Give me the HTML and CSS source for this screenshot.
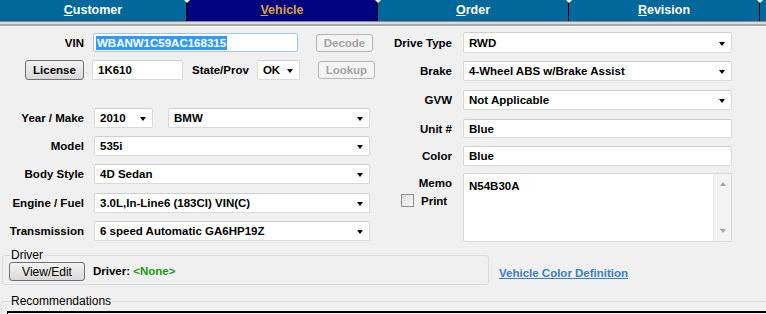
FILE: index.html
```html
<!DOCTYPE html>
<html lang="en">
<head>
    <meta charset="UTF-8">
    <title>Vehicle</title>
    <link rel="stylesheet" href="styles.css">
</head>
<body>
    <div class="tabs">
        <div class="tab"><u>C</u>ustomer</div>
        <div class="tab active"><u>V</u>ehicle</div>
        <div class="tab"><u>O</u>rder</div>
        <div class="tab"><u>R</u>evision</div>
        <div class="tab rest"></div>
    </div>
    <div class="rule"></div>

    <div class="main">
        <!-- левая колонка -->
        <div class="left">
            <div class="row r-vin">
                <div class="label">VIN</div>
                <div class="input vin w-vin"><span class="sel">WBANW1C59AC168315</span></div>
                <div class="btn disabled">Decode</div>
            </div>
            <div class="row r-lic">
                <div class="label"><div class="btn lic">License</div></div>
                <div class="input w-lic">1K610</div>
                <div class="label2">State/Prov</div>
                <div class="select w-state">OK</div>
                <div class="btn disabled">Lookup</div>
            </div>
            <div class="row r-year">
                <div class="label">Year / Make</div>
                <div class="select w-year">2010</div>
                <div class="select w-make">BMW</div>
            </div>
            <div class="row r-std">
                <div class="label">Model</div>
                <div class="select w-full">535i</div>
            </div>
            <div class="row r-std">
                <div class="label">Body Style</div>
                <div class="select w-full">4D Sedan</div>
            </div>
            <div class="row r-eng">
                <div class="label">Engine / Fuel</div>
                <div class="select w-full">3.0L,In-Line6 (183CI) VIN(C)</div>
            </div>
            <div class="row r-std">
                <div class="label">Transmission</div>
                <div class="select w-full">6 speed Automatic GA6HP19Z</div>
            </div>
        </div>

        <!-- правая колонка -->
        <div class="right">
            <div class="row r-drive">
                <div class="label">Drive Type</div>
                <div class="select w-right">RWD</div>
            </div>
            <div class="row r-brake">
                <div class="label">Brake</div>
                <div class="select w-right">4-Wheel ABS w/Brake Assist</div>
            </div>
            <div class="row r-gvw">
                <div class="label">GVW</div>
                <div class="select w-right">Not Applicable</div>
            </div>
            <div class="row r-unit">
                <div class="label">Unit #</div>
                <div class="input w-right">Blue</div>
            </div>
            <div class="row r-color">
                <div class="label">Color</div>
                <div class="input w-right">Blue</div>
            </div>
            <div class="row r-memo">
                <div class="label memo-label">
                    <span>Memo</span>
                    <label class="print"><span class="check"></span>Print</label>
                </div>
                <div class="memo w-right">
                    <div class="memo-text">N54B30A</div>
                    <div class="scroll">
                        <span class="up"></span>
                        <span class="down"></span>
                    </div>
                </div>
            </div>
        </div>
    </div>

    <div class="driver-row">
        <fieldset class="driver">
            <legend>Driver</legend>
            <div class="driver-line">
                <div class="btn view">View/Edit</div>
                <span class="driver-name">Driver: <span class="none">&lt;None&gt;</span></span>
            </div>
        </fieldset>
        <a class="color-link" href="#">Vehicle Color Definition</a>
    </div>

    <fieldset class="recs">
        <legend>Recommendations</legend>
        <div class="recs-box"></div>
    </fieldset>
</body>
</html>
```

FILE: styles.css
```css
html {
    overflow: hidden;
}
body {
    margin: 0;
    background-color: #f0f0f0;
    font-family: "Liberation Sans", Arial, sans-serif;
    font-size: 11.5px;
    font-weight: bold;
    color: #000;
    overflow: hidden;
    height: 314px;
}
.tabs {
    display: flex;
    height: 21px;
    background-color: #00689b;
}
.tab {
    position: relative;
    width: 190px;
    line-height: 20px;
    text-align: center;
    color: #fff;
    font-size: 12.5px;
    border-right: 1px solid #000;
    background-color: #00689b;
}
.tab:first-child {
    width: 186px;
}
.tab::after {
    content: "";
    position: absolute;
    top: 0;
    right: -4px;
    border-left: 3px solid transparent;
    border-right: 3px solid transparent;
    border-top: 3px solid #fff;
    z-index: 1;
}
.tab.active {
    background-color: #02037f;
    color: #d9a23c;
}
.tab.rest {
    width: auto;
    flex: 1;
    border-right: none;
}
.tab.rest::after {
    display: none;
}
.rule {
    height: 2px;
    border-top: 1px solid #8a8a8a;
    border-bottom: 2px solid #a9a9a9;
    background-color: #dcdcdc;
    box-shadow: 0 1px 0 #fff;
}

.main {
    display: flex;
}
.left {
    width: 390px;
    padding-top: 7px;
}
.right {
    padding-top: 6px;
}
.row {
    display: flex;
    align-items: center;
}
.left .label {
    width: 84px;
    margin-right: 9px;
    display: flex;
    justify-content: flex-end;
}
.right .label {
    width: 62px;
    margin-right: 11px;
    display: flex;
    justify-content: flex-end;
}
.r-vin { height: 19px; }
.r-lic { height: 20px; margin-top: 8px; }
.r-year { height: 20px; margin-top: 28px; }
.r-std { height: 20px; margin-top: 8px; }
.r-eng { height: 20px; margin-top: 9px; }
.r-drive { height: 21px; }
.r-brake { height: 20px; margin-top: 8px; }
.r-gvw { height: 20px; margin-top: 9px; }
.r-unit { height: 19px; margin-top: 9px; }
.r-color { height: 20px; margin-top: 8px; }
.r-memo { height: 69px; margin-top: 7px; align-items: stretch; }

.input, .select {
    box-sizing: border-box;
    height: 100%;
    background-color: #fff;
    border: 1px solid #dadada;
    border-top-color: #cfcfcf;
    border-radius: 2px;
    padding: 0 5px;
    display: flex;
    align-items: center;
}
.select {
    position: relative;
    padding-right: 16px;
}
.select::after {
    content: "";
    position: absolute;
    right: 6px;
    top: 50%;
    margin-top: -1px;
    border-left: 3.5px solid transparent;
    border-right: 3.5px solid transparent;
    border-top: 4px solid #000;
}
.vin {
    border-color: #a3c7e8;
    padding-left: 2px;
}
.sel {
    background-color: #3399ff;
    color: #fff;
    padding: 1px 1px;
}
.w-vin { width: 205px; }
.w-lic { width: 91px; margin-left: -1px; }
.w-state { width: 43px; }
.w-year { width: 59px; margin-left: 1px; }
.w-make { width: 202px; margin-left: 15px; }
.w-full { width: 276px; margin-left: 1px; }
.w-right { width: 269px; }
.label2 {
    margin: 0 8px 0 9px;
}

.btn {
    box-sizing: border-box;
    height: 19px;
    display: flex;
    align-items: center;
    justify-content: center;
    border: 1px solid #707070;
    border-radius: 3px;
    background: linear-gradient(#f3f3f3, #e6e6e6 50%, #d8d8d8);
}
.btn.disabled {
    width: 57px;
    height: 18px;
    margin-left: 18px;
    color: #a3a3a3;
    border-color: #b5b5b5;
    background: #f4f4f4;
}
.btn.lic {
    width: 59px;
    height: 20px;
    margin-right: 0;
}

.right .memo-label {
    flex-direction: column;
    justify-content: flex-start;
    align-items: flex-end;
    padding-top: 4px;
}
.print {
    display: flex;
    align-items: center;
    margin-top: 5px;
    width: 48px;
    margin-right: 3px;
    margin-left: -8px;
}
.check {
    box-sizing: border-box;
    flex: none;
    width: 13px;
    height: 13px;
    border: 1px solid #8e8e8e;
    background: linear-gradient(135deg, #dcdcdc, #fafafa);
    margin-right: 7px;
}
.memo {
    box-sizing: border-box;
    height: 100%;
    background-color: #fff;
    border: 1px solid #d9d9d9;
    border-radius: 2px;
    display: flex;
}
.memo-text {
    flex: 1;
    padding: 6px 5px;
}
.scroll {
    width: 17px;
    background-color: #f4f4f4;
    border-left: 1px solid #ececec;
    display: flex;
    flex-direction: column;
    justify-content: space-between;
    align-items: center;
    padding: 8px 0;
}
.up {
    border-left: 3.5px solid transparent;
    border-right: 3.5px solid transparent;
    border-bottom: 4px solid #a6a6a6;
}
.down {
    border-left: 3.5px solid transparent;
    border-right: 3.5px solid transparent;
    border-top: 4px solid #a6a6a6;
}

.driver-row {
    display: flex;
    align-items: center;
    margin-top: 7px;
}
fieldset {
    margin: 0;
    border: 1px solid #d5dde4;
    border-radius: 3px;
}
legend {
    padding: 0 1px;
    line-height: 12px;
    font-weight: normal;
    font-size: 12px;
    margin-left: 1px;
}
.driver {
    width: 487px;
    box-sizing: border-box;
    margin-left: 2px;
    padding: 0 6px 3px 6px;
}
.driver-line {
    display: flex;
    align-items: center;
}
.btn.view {
    width: 76px;
    height: 19px;
    font-weight: normal;
    font-size: 12px;
    margin-top: 1px;
}
.driver-name {
    margin-left: 8px;
}
.none {
    color: #149a14;
}
.color-link {
    margin-left: 10px;
    margin-top: 11px;
    color: #3b7ec3;
    font-size: 11.5px;
}
.recs {
    margin-top: 10px;
    margin-left: 1px;
    padding: 4px 0 0 5px;
    border-right: none;
    border-bottom: none;
}
.recs legend {
    margin-left: 3px;
}
.recs-box {
    height: 2px;
    border-top: 2px solid #000;
    border-left: 1px solid #000;
    background-color: #f4f4f4;
}
```
